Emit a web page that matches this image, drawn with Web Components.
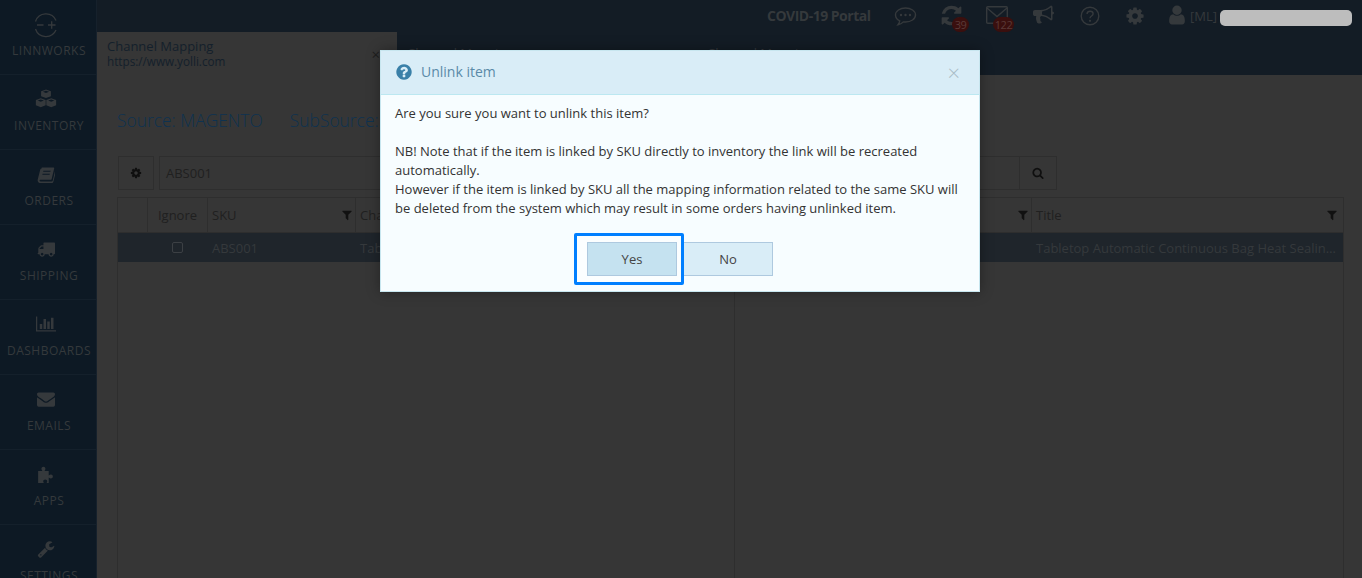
<!DOCTYPE html>
<html>
<head>
<meta charset="utf-8">
<title>Channel Mapping</title>
<style>
  html, body { margin: 0; height: 100%; overflow: hidden; background: #363636; }
  body { font-family: "Open Sans", sans-serif; }
</style>
</head>
<body>
<lw-app></lw-app>

<script>
const ICONS = {
  search: "M1216 832q0-185-131.500-316.500t-316.500-131.500-316.500 131.500-131.500 316.500 131.500 316.500 316.500 131.500 316.500-131.500 131.500-316.500zm512 832q0 52-38 90t-90 38q-54 0-90-38l-343-342q-179 124-399 124-143 0-273.500-55.500t-225-150-150-225-55.500-273.500 55.500-273.500 150-225 225-150 273.500-55.500 273.500 55.500 225 150 150 225 55.500 273.500q0 220-124 399l343 343q37 37 37 90z",
  filter: "M1595 295q17 41-14 70l-493 493v742q0 42-39 59-13 5-25 5-27 0-45-19l-256-256q-19-19-19-45v-486l-493-493q-31-29-14-70 17-39 59-39h1280q42 0 59 39z",
  cog: "M1152 896q0-106-75-181t-181-75-181 75-75 181 75 181 181 75 181-75 75-181zm512-109v222q0 12-8 23t-20 13l-185 28q-19 54-39 91 35 50 107 138 10 12 10 25t-9 23q-27 37-99 108t-94 71q-12 0-26-9l-138-108q-44 23-91 38-16 136-29 186-7 28-36 28h-222q-14 0-24.500-8.500t-11.500-21.500l-28-184q-49-16-90-37l-141 107q-10 9-25 9-14 0-25-11-126-114-165-168-7-10-7-23 0-12 8-23 15-21 51-66.500t54-70.500q-27-50-41-99l-183-27q-13-2-21-12.500t-8-23.500v-222q0-12 8-23t19-13l186-28q14-46 39-92-40-57-107-138-10-12-10-24 0-10 9-23 26-36 98.500-107.500t94.500-71.500q13 0 26 10l138 107q44-23 91-38 16-136 29-186 7-28 36-28h222q14 0 24.500 8.500t11.500 21.500l28 184q49 16 90 37l142-107q9-9 24-9 13 0 25 10 129 119 165 170 7 8 7 22 0 12-8 23-15 21-51 66.500t-54 70.500q26 50 41 98l183 28q13 2 21 12.500t8 23.500z",
  question: "M1024 1376v-192q0-14-9-23t-23-9h-192q-14 0-23 9t-9 23v192q0 14 9 23t23 9h192q14 0 23-9t9-23zm256-672q0-88-55.500-163t-138.500-116-170-41q-243 0-371 213-15 24 8 42l132 100q7 6 19 6 16 0 25-12 53-68 86-92 34-24 86-24 48 0 85.500 26t37.500 59q0 38-20 61t-68 45q-63 28-115.500 86.500t-52.500 125.500v36q0 14 9 23t23 9h192q14 0 23-9t9-23q0-19 21.500-49.500t54.500-49.500q32-18 49-28.500t46-35 44.500-48 28-60.500 12.500-81zm384 192q0 209-103 385.500t-279.500 279.500-385.500 103-385.500-103-279.500-279.500-103-385.500 103-385.500 279.500-279.500 385.500-103 385.500 103 279.500 279.500 103 385.500z",
  user: "M1536 1399q0 109-62.500 187t-150.500 78h-854q-88 0-150.500-78t-62.500-187q0-85 8.500-160.500t31.500-152 58.500-131 94-89 134.500-34.500q131 128 313 128t313-128q76 0 134.500 34.500t94 89 58.500 131 31.500 152 8.500 160.500zm-256-887q0 159-112.500 271.500t-271.500 112.500-271.500-112.500-112.500-271.500 112.500-271.500 271.500-112.500 271.500 112.500 112.500 271.500z",
  envelope: "M1792 710v794q0 66-47 113t-113 47h-1472q-66 0-113-47t-47-113v-794q44 49 101 87 362 246 497 345 57 42 92.500 65.500t94.500 48 110 24.500h2q51 0 110-24.500t94.500-48 92.500-65.500q170-123 498-345 57-39 100-87zm0-294q0 79-49 151t-122 123q-376 261-468 325-10 7-42.500 30.500t-54 38-52 32.500-57.500 27-50 9h-2q-23 0-50-9t-57.500-27-52-32.500-54-38-42.500-30.500q-91-64-262-182.500t-205-142.500q-62-42-117-115.500t-55-136.500q0-78 41.500-130t118.500-52h1472q65 0 112.500 47t47.500 113z",
  wrench: "M448 1472q0-26-19-45t-45-19-45 19-19 45 19 45 45 19 45-19 19-45zm644-420l-682 682q-37 37-90 37-52 0-91-37l-106-108q-38-36-38-90 0-53 38-91l681-681q39 98 114.500 173.500t173.500 114.500zm634-435q0 39-23 106-47 134-164.500 217.500t-258.500 83.500q-185 0-316.500-131.500t-131.500-316.500 131.500-316.500 316.500-131.500q58 0 121.500 16.500t107.500 46.500q16 11 16 28t-16 28l-293 169v224l193 107q5-3 79-48.500t135.500-81 70.500-35.500q15 0 23.500 10t8.500 25z",
  truck: "M640 1408q0-52-38-90t-90-38-90 38-38 90 38 90 90 38 90-38 38-90zm-384-512h384v-256h-158q-13 0-22 9l-195 195q-9 9-9 22v30zm1280 512q0-52-38-90t-90-38-90 38-38 90 38 90 90 38 90-38 38-90zm256-1088v1024q0 15-4 26.500t-13.500 18.500-16.500 11.500-23.500 6-22.500 2-25.500 0-22.500-.5q0 106-75 181t-181 75-181-75-75-181h-384q0 106-75 181t-181 75-181-75-75-181h-64q-3 0-22.500.5t-25.500 0-22.500-2-23.500-6-16.500-11.500-13.500-18.500-4-26.500q0-26 19-45t45-19v-320q0-8-.5-35t0-38 2.500-34.500 6.500-37 14-30.500 22.500-30l198-198q19-19 50.500-32t58.500-13h160v-192q0-26 19-45t45-19h1024q26 0 45 19t19 45z",
  chart: "M640 896v512h-256v-512h256zm384-512v1024h-256v-1024h256zm1024 1152v128h-2048v-1536h128v1408h1920zm-640-896v768h-256v-768h256zm384-384v1152h-256v-1152h256z",
  bullhorn: "M1664 640q53 0 90.500 37.500t37.500 90.500-37.500 90.500-90.500 37.500v384q0 52-38 90t-90 38q-417-347-812-380-58 19-91 66t-31 100.500 40 92.500q-20 33-23 65.500t6 58 33.500 55 48 50 61.500 50.500q-29 58-111.500 83t-168.500 11.500-132-55.500q-7-23-29.500-87.500t-32-94.500-23-89-15-101 3.500-98.500 22-110.500h-122q-66 0-113-47t-47-113v-192q0-66 47-113t113-47h480q435 0 896-384 52 0 90 38t38 90v384zm-128 604v-954q-394 302-768 343v270q377 42 768 341z",
  refresh: "M1639 1056q0 5-1 7-64 268-268 434.500t-478 166.500q-146 0-282.500-55t-243.500-157l-129 129q-19 19-45 19t-45-19-19-45v-448q0-26 19-45t45-19h448q26 0 45 19t19 45-19 45l-137 137q71 66 161 102t187 36q134 0 250-65t186-179q11-17 53-117 8-23 30-23h192q13 0 22.500 9.500t9.500 22.500zm25-800v448q0 26-19 45t-45 19h-448q-26 0-45-19t-19-45 19-45l138-138q-148-137-349-137-134 0-250 65t-186 179q-11 17-53 117-8 23-30 23h-199q-13 0-22.500-9.500t-9.500-22.500v-7q65-268 270-434.500t480-166.500q146 0 284 55.500t245 156.500l130-129q19-19 45-19t45 19 19 45z",
  puzzle: "M200 1700V560h400c-60-80-90-130-90-200 0-120 90-200 190-200s190 80 190 200c0 70-30 120-90 200h400v420c80-60 130-90 200-90 120 0 190 90 190 190s-70 190-190 190c-70 0-120-30-200-90v520H1000c40-70 60-110 60-170 0-100-90-170-190-170s-190 70-190 170c0 60 20 100 60 170z",
  book: "M470 250h1180c50 0 70 40 60 90l-250 1050c-15 60-55 90-110 90H330c-60 0-90 40-70 100 15 50 60 70 110 70h1090c60 0 90-30 105-80l260-1080c50 30 70 80 55 140l-250 1040c-25 90-90 140-180 140H320c-130 0-230-90-250-230-10-60-5-90 10-150l240-960c20-70 80-120 150-120zM640 560l-30 110h720l30-110zM560 860l-30 110h720l30-110z",
  cubes: "M896 120l400 150v400l-400 150-400-150V270zM896 220l-250 95 250 95 250-95zM470 830l400 150v420l-400 170-400-170V980zM470 930l-250 95 250 95 250-95zM1322 830l400 150v420l-400 170-400-170V980zM1322 930l-250 95 250 95 250-95z"
};

class LwIcon extends HTMLElement {
  connectedCallback() {
    const name = this.getAttribute("name");
    const width = name === "chart" ? 2048 : 1792;
    const root = this.shadowRoot || this.attachShadow({ mode: "open" });
    root.innerHTML = `
      <style>
        :host { display: inline-flex; width: 1em; height: 1em; flex: none; }
        svg { width: 100%; height: 100%; fill: currentColor; display: block; fill-rule: evenodd; }
      </style>
      <svg viewBox="0 0 ${width} 1792" aria-hidden="true"><path d="${ICONS[name]}"/></svg>`;
  }
}
customElements.define("lw-icon", LwIcon);

const navTemplate = document.createElement("template");
navTemplate.innerHTML = `
  <style>
    :host {
      display: flex;
      flex-direction: column;
      align-items: center;
      box-sizing: border-box;
      height: 75px;
      padding-top: 10px;
      border-bottom: 1px solid #14202b;
      color: #35393c;
    }
    .icon { height: 28px; margin-right: 5px; font-size: var(--icon-size, 18px); display: flex; align-items: center; justify-content: center; }
    .label { font-size: 12px; line-height: 16px; margin-top: 5px; padding-left: 2px; letter-spacing: .5px; text-transform: uppercase; white-space: nowrap; }
  </style>
  <div class="icon"><slot name="icon"></slot></div>
  <div class="label"><slot></slot></div>
`;
class LwNavItem extends HTMLElement {
  constructor() {
    super();
    this.attachShadow({ mode: "open" }).append(navTemplate.content.cloneNode(true));
  }
}
customElements.define("lw-nav-item", LwNavItem);

const sidebarTemplate = document.createElement("template");
sidebarTemplate.innerHTML = `
  <style>
    :host { display: block; width: 97px; flex: none; height: 578px; overflow: hidden; background: #0d1924; border-right: 1px solid #16212c; box-sizing: border-box; }
    svg.logo { width: 24px; height: 26px; display: block; margin-top: 2px; }
  </style>
  <lw-nav-item>
    <svg slot="icon" class="logo" viewBox="0 0 24 26" fill="none" stroke="#35393c" stroke-width="1.3">
      <path d="M1.500 9.500A11 11 0 0 1 22 8.500"/>
      <path d="M1.500 17A11 11 0 0 0 22 18"/>
      <path d="M3 13h6.500M14 13h7.500M17.700 9.200v7.600"/>
    </svg>
    Linnworks
  </lw-nav-item>
  <lw-nav-item style="--icon-size:22px"><lw-icon slot="icon" name="cubes"></lw-icon>Inventory</lw-nav-item>
  <lw-nav-item><lw-icon slot="icon" name="book"></lw-icon>Orders</lw-nav-item>
  <lw-nav-item><lw-icon slot="icon" name="truck"></lw-icon>Shipping</lw-nav-item>
  <lw-nav-item style="--icon-size:20px"><lw-icon slot="icon" name="chart"></lw-icon>Dashboards</lw-nav-item>
  <lw-nav-item><lw-icon slot="icon" name="envelope"></lw-icon>Emails</lw-nav-item>
  <lw-nav-item style="--icon-size:19px"><lw-icon slot="icon" name="puzzle"></lw-icon>Apps</lw-nav-item>
  <lw-nav-item><lw-icon slot="icon" name="wrench"></lw-icon>Settings</lw-nav-item>
`;
class LwSidebar extends HTMLElement {
  constructor() {
    super();
    this.attachShadow({ mode: "open" }).append(sidebarTemplate.content.cloneNode(true));
  }
}
customElements.define("lw-sidebar", LwSidebar);

const topbarTemplate = document.createElement("template");
topbarTemplate.innerHTML = `
  <style>
    :host { display: flex; align-items: center; justify-content: flex-end; height: 32px; color: #35393c; position: relative; }
    .portal { position: absolute; left: 670px; top: 6px; font-size: 14px; font-weight: 700; letter-spacing: -.5px; line-height: 20px; white-space: nowrap; }
    .tool { position: absolute; top: 6px; font-size: 20px; line-height: 20px; display: block; }
    .badge { position: absolute; top: 17px; height: 15px; border-radius: 8px; background: #3a0f0e; color: #5a3a37; font-size: 11px; line-height: 15px; text-align: center; letter-spacing: -.5px; }
    .ml { position: absolute; left: 1093px; top: 7px; font-size: 13px; line-height: 18px; }
    .redact { position: absolute; left: 1123px; top: 10px; width: 132px; height: 16px; border-radius: 5px; background: #bdbdbd; }
    svg.line { display: block; fill: none; stroke: #35393c; stroke-width: 1.4; }
  </style>
  <span class="portal">COVID-19 Portal</span>
  <span class="tool" style="left:797px;top:6px">
    <svg class="line" style="width:23px;height:22px" viewBox="0 0 23 22">
      <path d="M11.500 2C6 2 1.500 5 1.500 9c0 2.500 1.700 4.600 4.200 5.800-.2 1.500-.8 2.900-1.700 4 2.100-.4 4-1.400 5.300-2.900.7.100 1.400.1 2.200.1 5.500 0 10-3 10-7s-4.500-7-10-7z"/>
      <circle cx="7" cy="9" r="1.200" fill="#35393c" stroke="none"/><circle cx="11.500" cy="9" r="1.200" fill="#35393c" stroke="none"/><circle cx="16" cy="9" r="1.200" fill="#35393c" stroke="none"/>
    </svg>
  </span>
  <span class="tool" style="left:843px;top:4px;font-size:23px;line-height:23px"><lw-icon name="refresh"></lw-icon></span>
  <span class="badge" style="left:855px;width:17px">39</span>
  <span class="tool" style="left:889px;top:6px">
    <svg class="line" style="width:22px;height:18px" viewBox="0 0 22 18"><rect x=".7" y=".7" width="20.600" height="16.600" rx="1"/><path d="M1 2l10 8.500L21 2"/></svg>
  </span>
  <span class="badge" style="left:896px;width:21px">122</span>
  <span class="tool" style="left:936px;top:4px;font-size:21px;line-height:21px"><lw-icon name="bullhorn"></lw-icon></span>
  <span class="tool" style="left:983px;top:6px">
    <svg class="line" viewBox="0 0 20 20" style="width:20px;height:20px">
      <circle cx="10" cy="10" r="8.800"/>
      <path d="M7 8c.2-1.700 1.500-2.700 3.100-2.700 1.700 0 3 1.100 3 2.500 0 2.300-3.100 2.100-3.100 4.500"/>
      <circle cx="10" cy="14.800" r="1.100" fill="#35393c" stroke="none"/>
    </svg>
  </span>
  <span class="tool" style="left:1028px;top:6px"><lw-icon name="cog"></lw-icon></span>
  <span class="tool" style="left:1069px;top:4px;font-size:22px;line-height:22px"><lw-icon name="user"></lw-icon></span>
  <span class="ml">[ML]</span>
  <span class="redact"></span>
`;
class LwTopbar extends HTMLElement {
  constructor() {
    super();
    this.attachShadow({ mode: "open" }).append(topbarTemplate.content.cloneNode(true));
  }
}
customElements.define("lw-topbar", LwTopbar);

const tabsTemplate = document.createElement("template");
tabsTemplate.innerHTML = `
  <style>
    :host { display: flex; height: 43px; color: #35393c; font-size: 13px; line-height: 15px; }
    .tab { box-sizing: border-box; width: 300px; flex: none; padding: 14px 10px 0; position: relative; white-space: nowrap; }
    .active { background: #363636; color: #14202b; padding-top: 7px; }
    .url { font-size: 11.700px; display: block; }
    .close { position: absolute; right: 17px; top: 15px; font-size: 15px; color: #1e1e1e; }
  </style>
  <div class="tab active">Channel Mapping<span class="url">https://www.yolli.com</span><span class="close">×</span></div>
  <div class="tab">Channel Mapping</div>
  <div class="tab">Channel Mapping</div>
`;
class LwTabs extends HTMLElement {
  constructor() {
    super();
    this.attachShadow({ mode: "open" }).append(tabsTemplate.content.cloneNode(true));
  }
}
customElements.define("lw-tabs", LwTabs);

const gridTemplate = document.createElement("template");
gridTemplate.innerHTML = `
  <style>
    :host { display: block; font-size: 13px; color: #202020; }
    .source { display: flex; gap: 27px; font-size: 17.400px; font-weight: 300; line-height: 24px; color: #0e3250; padding: 0 0 0 20px; height: 24px; margin-top: 33px; white-space: nowrap; }
    .search { display: flex; margin: 24px 0 0 21px; width: 939px; height: 34px; }
    .btn { box-sizing: border-box; width: 36px; height: 34px; border: 1px solid #2e2e2e; display: flex; align-items: center; justify-content: center; font-size: 12px; color: #0f0f0f; flex: none; }
    .btn.last { width: 38px; }
    .input { box-sizing: border-box; flex: 1; height: 34px; border: 1px solid #2e2e2e; border-right: 0; margin-left: 5px; padding-left: 6px; line-height: 32px; }
    .tables { display: grid; grid-template-columns: 616px 609px; margin: 7px 0 0 20px; height: 400px; width: 1227px; border-left: 1px solid #2e2e2e; border-right: 1px solid #2e2e2e; box-sizing: border-box; }
    .table { min-width: 0; }
    .table + .table { border-left: 1px solid #2e2e2e; }
    .row { display: grid; height: 36px; border-top: 1px solid #2e2e2e; border-bottom: 1px solid #2e2e2e; box-sizing: border-box; }
    .left .row, .left .data { grid-template-columns: 30px 60px 148px 1fr; }
    .right .row, .right .data { grid-template-columns: 1fr 311px; }
    .cell { border-right: 1px solid #2e2e2e; padding: 0 2px 0 4px; line-height: 34px; display: flex; justify-content: space-between; align-items: center; white-space: nowrap; overflow: hidden; min-width: 0; }
    .cell:last-child { border-right: 0; padding-right: 5px; }
    .cell.center { justify-content: center; padding: 0; }
    .cell lw-icon { font-size: 12px; color: #111; }
    .data { display: grid; height: 29px; background: #1f252b; color: #35393c; line-height: 30px; }
    .data span { padding: 0 5px 0 4px; white-space: nowrap; overflow: hidden; text-overflow: ellipsis; min-width: 0; }
    .check { justify-self: center; align-self: center; width: 9px; height: 9px; padding: 0 !important; margin: -1px 2px 0 0; border: 1px solid #3c4044; border-radius: 2px; }
  </style>
  <div class="source"><span>Source: MAGENTO</span><span>SubSource: https://www.yolli.com</span></div>
  <div class="search">
    <div class="btn"><lw-icon name="cog"></lw-icon></div>
    <div class="input">ABS001</div>
    <div class="btn last"><lw-icon name="search"></lw-icon></div>
  </div>
  <div class="tables">
    <div class="table left">
      <div class="row">
        <div class="cell"></div>
        <div class="cell center">Ignore</div>
        <div class="cell">SKU<lw-icon name="filter"></lw-icon></div>
        <div class="cell">Channel Title<lw-icon name="filter"></lw-icon></div>
      </div>
      <div class="data"><span></span><span class="check"></span><span>ABS001</span><span>Tabletop Automatic Continuous Bag Heat Sealing</span></div>
    </div>
    <div class="table right">
      <div class="row">
        <div class="cell">SKU<lw-icon name="filter"></lw-icon></div>
        <div class="cell">Title<lw-icon name="filter"></lw-icon></div>
      </div>
      <div class="data"><span>ABS001</span><span>Tabletop Automatic Continuous Bag Heat Sealing Machine</span></div>
    </div>
  </div>
`;
class LwMappingGrid extends HTMLElement {
  constructor() {
    super();
    this.attachShadow({ mode: "open" }).append(gridTemplate.content.cloneNode(true));
  }
}
customElements.define("lw-mapping-grid", LwMappingGrid);

const dialogTemplate = document.createElement("template");
dialogTemplate.innerHTML = `
  <style>
    :host {
      position: absolute;
      left: 380px;
      top: 50px;
      width: 600px;
      height: 242px;
      display: flex;
      flex-direction: column;
      box-sizing: border-box;
      background: #f7fdff;
      border: 1px solid #c7e6ef;
      box-shadow: 0 0 12px rgba(0, 0, 0, .35);
      font-size: 13px;
      color: #333;
    }
    header { display: flex; align-items: center; gap: 8px; height: 44px; box-sizing: border-box; padding: 0 19px 2px 14px; background: #d9edf7; border-bottom: 1px solid #bce8f1; color: #5a8aa8; font-size: 14px; flex: none; }
    header lw-icon { font-size: 18px; color: #3a80a8; }
    .title { flex: 1; }
    .close { color: #a9bcc6; font-size: 22px; line-height: 20px; font-weight: 300; }
    .body { padding: 9px 14px 0; line-height: 19px; }
    footer { display: flex; justify-content: center; margin-top: 24px; }
    button { font: inherit; width: 90px; height: 34px; padding: 0; color: #444; background: #d9edf7; border: 1px solid #aec9df; position: relative; }
    .focus { position: relative; z-index: 1; display: block; }
    .focus::before { content: ""; position: absolute; left: -13px; right: -7px; top: -9px; bottom: -9px; background: #fbfeff; border: 3px solid #007fff; border-radius: 2px; }
    button.yes { display: block; background: #c5e2f0; }
    button.no { margin-left: 6px; }
  </style>
  <header><lw-icon name="question"></lw-icon><span class="title"><slot name="title"></slot></span><span class="close">×</span></header>
  <div class="body"><slot></slot></div>
  <footer><span class="focus"><button class="yes">Yes</button></span><button class="no">No</button></footer>
`;
class LwDialog extends HTMLElement {
  constructor() {
    super();
    this.attachShadow({ mode: "open" }).append(dialogTemplate.content.cloneNode(true));
  }
}
customElements.define("lw-dialog", LwDialog);

const appTemplate = document.createElement("template");
appTemplate.innerHTML = `
  <style>
    :host { display: flex; width: 1362px; height: 578px; overflow: hidden; position: relative; background: #131c25; font-family: "Open Sans", sans-serif; }
    main { flex: 1; min-width: 0; display: flex; flex-direction: column; }
    .content { flex: 1; background: #363636; overflow: hidden; }
  </style>
  <lw-sidebar></lw-sidebar>
  <main>
    <lw-topbar></lw-topbar>
    <lw-tabs></lw-tabs>
    <div class="content"><lw-mapping-grid></lw-mapping-grid></div>
  </main>
  <lw-dialog>
    <span slot="title">Unlink item</span>
    Are you sure you want to unlink this item?<br><br>
    NB! Note that if the item is linked by SKU directly to inventory the link will be recreated automatically.<br>
    However if the item is linked by SKU all the mapping information related to the same SKU will be deleted from the system which may result in some orders having unlinked item.
  </lw-dialog>
`;
class LwApp extends HTMLElement {
  constructor() {
    super();
    this.attachShadow({ mode: "open" }).append(appTemplate.content.cloneNode(true));
  }
}
customElements.define("lw-app", LwApp);
</script>
</body>
</html>
